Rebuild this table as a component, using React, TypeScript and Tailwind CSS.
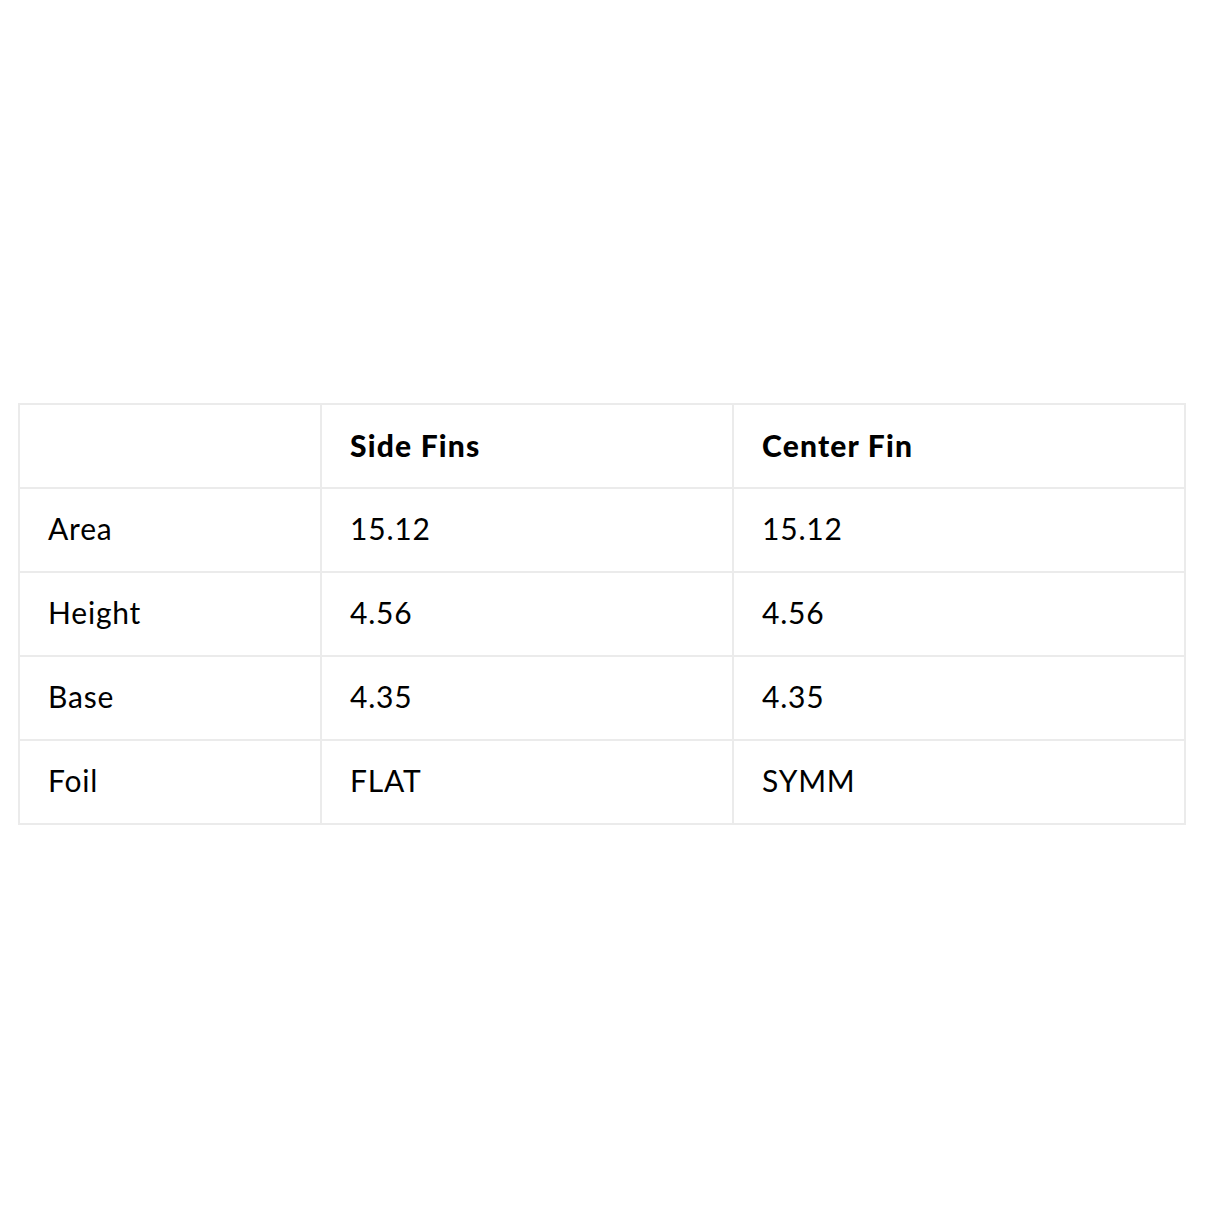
import React from "react";

const rows = [
  ["Area", "15.12", "15.12"],
  ["Height", "4.56", "4.56"],
  ["Base", "4.35", "4.35"],
  ["Foil", "FLAT", "SYMM"],
];

export default function App() {
  return (
    <div className="min-h-[1214px] w-[1214px] bg-white pt-[403px] pl-[18px]" style={{ fontFamily: "Lato, 'Noto Sans', sans-serif" }}>
      <table className="w-[1166px] border-collapse border-2 border-[#ebebeb] text-black text-[30px] table-fixed">
        <colgroup>
          <col className="w-[302px]" />
          <col className="w-[412px]" />
          <col className="w-[452px]" />
        </colgroup>
        <thead>
          <tr className="h-[84px]">
            <th className="border-2 border-[#ebebeb] pl-[28px] pb-[2px] text-left font-black"></th>
            <th className="border-2 border-[#ebebeb] pl-[28px] pb-[2px] text-left font-black tracking-[1.2px]">Side Fins</th>
            <th className="border-2 border-[#ebebeb] pl-[28px] pb-[2px] text-left font-black tracking-[1.2px]">Center Fin</th>
          </tr>
        </thead>
        <tbody>
          {rows.map((r) => (
            <tr key={r[0]} className="h-[84px]">
              {r.map((c, i) => (
                <td key={i} className="border-2 border-[#ebebeb] pl-[28px] pb-[3px] text-left font-normal tracking-[0.8px]">
                  {c}
                </td>
              ))}
            </tr>
          ))}
        </tbody>
      </table>
    </div>
  );
}
